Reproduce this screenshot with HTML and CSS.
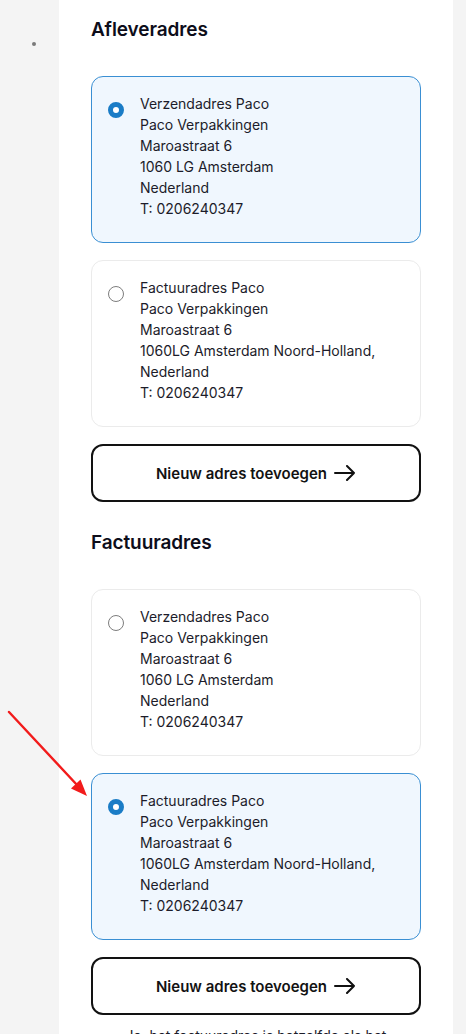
FILE: index.html
```html
<!DOCTYPE html>
<html lang="nl">
<head>
<meta charset="utf-8">
<title>Adressen</title>
<link rel="stylesheet" href="styles.css">
</head>
<body>
<div class="page">
  <aside class="rail"><span class="dot"></span></aside>
  <main class="panel">
    <section class="section">
      <h2 class="heading">Afleveradres</h2>
      <div class="list">
        <label class="card card--selected">
          <span class="radio radio--on"></span>
          <span class="address">
            <span>Verzendadres Paco</span>
            <span>Paco Verpakkingen</span>
            <span>Maroastraat 6</span>
            <span>1060 LG Amsterdam</span>
            <span>Nederland</span>
            <span>T: 0206240347</span>
          </span>
        </label>
        <label class="card">
          <span class="radio"></span>
          <span class="address">
            <span>Factuuradres Paco</span>
            <span>Paco Verpakkingen</span>
            <span>Maroastraat 6</span>
            <span>1060LG Amsterdam Noord-Holland,</span>
            <span>Nederland</span>
            <span>T: 0206240347</span>
          </span>
        </label>
        <button class="add-btn" type="button">Nieuw adres toevoegen
          <svg class="arrow-icon" width="22" height="16" viewBox="0 0 22 16" aria-hidden="true"><path d="M1 8H20M13 1L20 8L13 15" fill="none" stroke="#111" stroke-width="2" stroke-linecap="round" stroke-linejoin="round"/></svg>
        </button>
      </div>
    </section>
    <section class="section section--second">
      <h2 class="heading">Factuuradres</h2>
      <div class="list">
        <label class="card">
          <span class="radio"></span>
          <span class="address">
            <span>Verzendadres Paco</span>
            <span>Paco Verpakkingen</span>
            <span>Maroastraat 6</span>
            <span>1060 LG Amsterdam</span>
            <span>Nederland</span>
            <span>T: 0206240347</span>
          </span>
        </label>
        <label class="card card--selected">
          <span class="radio radio--on"></span>
          <span class="address">
            <span>Factuuradres Paco</span>
            <span>Paco Verpakkingen</span>
            <span>Maroastraat 6</span>
            <span>1060LG Amsterdam Noord-Holland,</span>
            <span>Nederland</span>
            <span>T: 0206240347</span>
          </span>
        </label>
        <button class="add-btn" type="button">Nieuw adres toevoegen
          <svg class="arrow-icon" width="22" height="16" viewBox="0 0 22 16" aria-hidden="true"><path d="M1 8H20M13 1L20 8L13 15" fill="none" stroke="#111" stroke-width="2" stroke-linecap="round" stroke-linejoin="round"/></svg>
        </button>
      </div>
      <p class="note">Ja, het factuuradres is hetzelfde als het afleveradres</p>
    </section>
  </main>
  <div class="gutter"></div>
</div>
<svg class="annotation" width="100" height="110" viewBox="0 700 100 110" aria-hidden="true">
  <line x1="9" y1="712" x2="78" y2="786" stroke="#f21b1b" stroke-width="2.4" stroke-linecap="round"/>
  <polygon points="87,796 80.5,779.5 71,788.5" fill="#f21b1b"/>
</svg>
</body>
</html>
```

FILE: styles.css
```css
html, body {
  margin: 0;
  padding: 0;
  background: #f4f4f4;
}
body {
  font-family: Inter, "Noto Sans", "Liberation Sans", sans-serif;
  color: #1c1c2a;
  position: relative;
  height: 1034px;
  overflow: hidden;
}
.page {
  display: grid;
  grid-template-columns: 59px 394px 1fr;
  min-height: 1034px;
}
.rail {
  background: #f4f4f4;
  padding: 42px 0 0 32px;
}
.dot {
  display: block;
  width: 4px;
  height: 4px;
  border-radius: 50%;
  background: #7a7a7a;
}
.gutter {
  background: #f4f4f4;
}
.panel {
  background: #ffffff;
  padding: 18px 32px 0 32px;
}
.section--second {
  margin-top: 29px;
}
.heading {
  margin: 0 0 34px 0;
  font-size: 19px;
  line-height: 24px;
  font-weight: 600;
  color: #0d0d1a;
  letter-spacing: -0.1px;
}
.list {
  display: flex;
  flex-direction: column;
  gap: 17px;
}
.card {
  display: flex;
  gap: 16px;
  align-items: flex-start;
  padding: 16px 16px 23px 16px;
  border: 1px solid #ebebeb;
  border-radius: 12px;
  background: #ffffff;
}
.card--selected {
  border-color: #3a8fd3;
  background: #f0f7fe;
}
.radio {
  flex: none;
  box-sizing: border-box;
  width: 16px;
  height: 16px;
  margin-top: 9px;
  border-radius: 50%;
  border: 1.5px solid #7d7d7d;
  background: #fff;
}
.radio--on {
  border: 5px solid #1a7cc6;
  background: #ffffff;
}
.address {
  display: flex;
  flex-direction: column;
  font-size: 14px;
  line-height: 21px;
  color: #1c1c2a;
}
.add-btn {
  display: flex;
  align-items: center;
  justify-content: center;
  gap: 7px;
  height: 58px;
  box-sizing: border-box;
  border: 2px solid #121212;
  border-radius: 12px;
  background: #ffffff;
  font-family: inherit;
  font-size: 15px;
  font-weight: 600;
  color: #121212;
  cursor: pointer;
}
.arrow-icon {
  display: block;
}
.note {
  margin: 10px 0 0 0;
  text-align: center;
  font-size: 14px;
  line-height: 21px;
  color: #1c1c2a;
}
.annotation {
  position: absolute;
  left: 0;
  top: 700px;
}
```
